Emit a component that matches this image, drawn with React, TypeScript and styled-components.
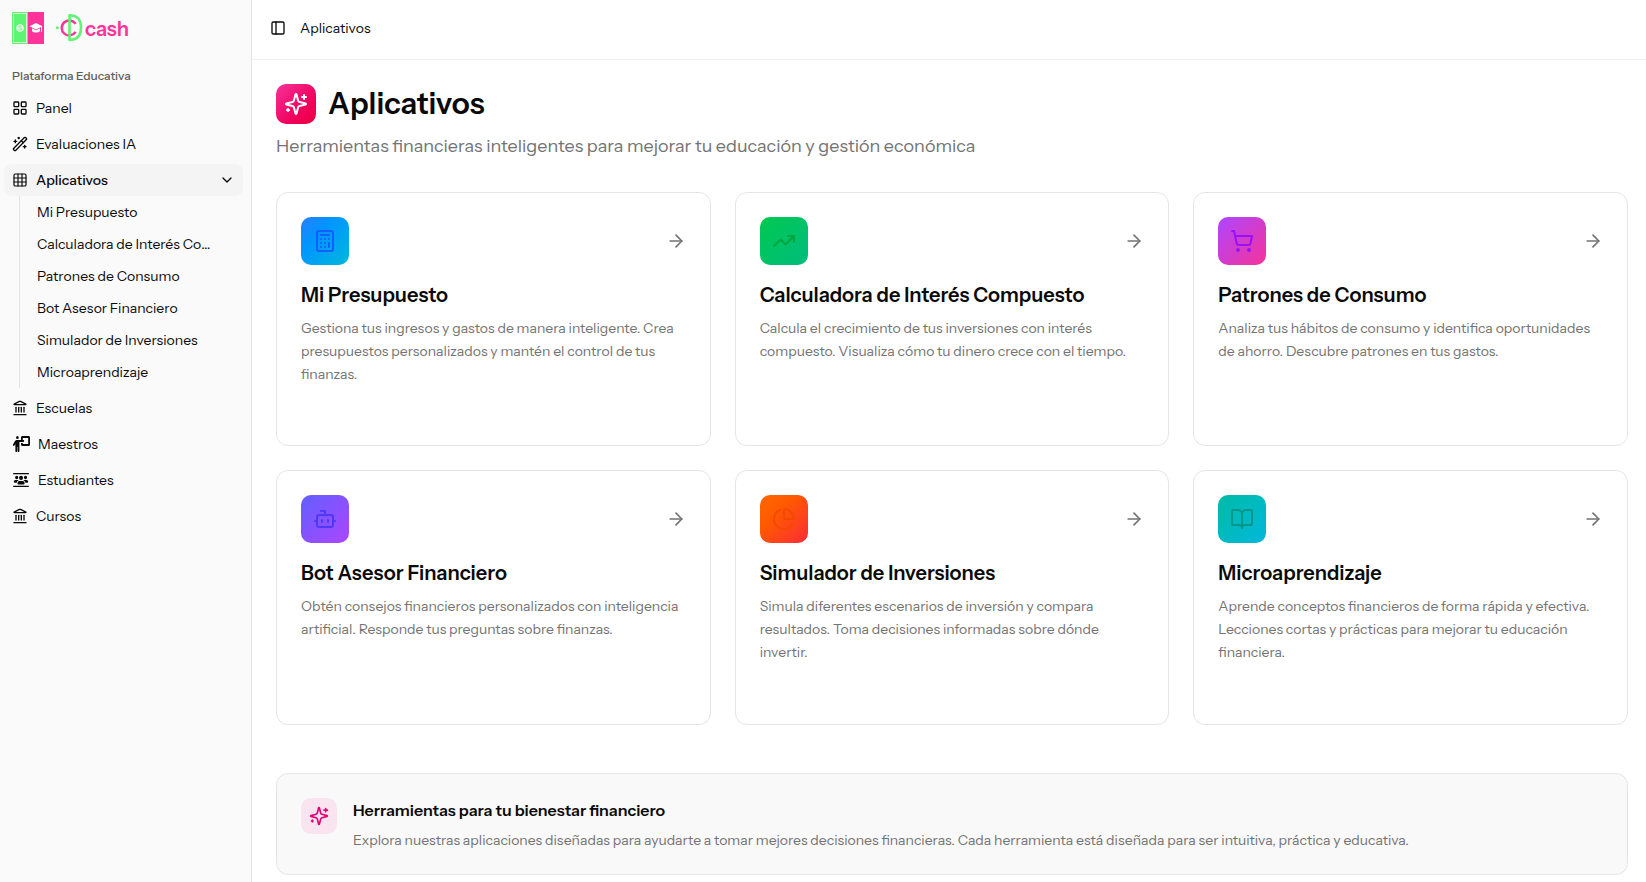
import React from "react";
import styled, { createGlobalStyle } from "styled-components";
import {
  ArrowRight,
  BookOpen,
  Bot,
  Calculator,
  ChartPie,
  ChevronDown,
  Grid3x3,
  Landmark,
  LayoutGrid,
  PanelLeft,
  ShoppingCart,
  TrendingUp,
  WandSparkles,
} from "lucide-react";
import { FaPersonChalkboard, FaUsersBetweenLines } from "react-icons/fa6";

const GlobalStyle = createGlobalStyle`
  *, *::before, *::after { box-sizing: border-box; }
  body {
    margin: 0;
    background: #fff;
    color: #0a0a0a;
    font-family: "Instrument Sans", "Liberation Sans", Arial, sans-serif;
    font-size: 14px;
    line-height: 20px;
  }
  h1, h2, h3, p, ul { margin: 0; padding: 0; }
  ul { list-style: none; }
  a { color: inherit; text-decoration: none; }
  button { font: inherit; color: inherit; border: 0; background: none; padding: 0; cursor: pointer; }
  svg { display: block; flex-shrink: 0; }
`;

const Layout = styled.div`
  display: flex;
  min-height: 100vh;
`;

const Sidebar = styled.aside`
  width: 252px;
  flex-shrink: 0;
  padding: 8px 8px 8px 4px;
  background: #fafafa;
  border-right: 1px solid #e5e5e5;
`;

const Brand = styled.a`
  display: flex;
  align-items: center;
  height: 40px;
  padding: 0 8px;
`;

const GroupLabel = styled.h3`
  height: 32px;
  margin-top: 12px;
  padding: 0 8px;
  color: #5c5c5c;
  font-size: 12px;
  font-weight: 500;
  line-height: 32px;
`;

const Menu = styled.ul`
  display: flex;
  flex-direction: column;
  gap: 4px;
`;

const MenuLink = styled.a`
  display: flex;
  align-items: center;
  gap: 8px;
  height: 32px;
  padding: 0 8px;
`;

const SolidIcon = styled.span<{ $width: number; $height: number }>`
  display: grid;
  place-items: center;
  width: 18px;
  height: 16px;

  svg {
    width: ${(p) => p.$width}px;
    height: ${(p) => p.$height}px;
  }
`;

const MenuToggle = styled.button`
  display: flex;
  align-items: center;
  gap: 8px;
  width: 100%;
  height: 32px;
  padding: 0 8px;
  border-radius: 8px;
  background: #f4f4f5;
  text-align: left;

  span { flex: 1; font-weight: 500; }
`;

const SubMenu = styled.ul`
  display: flex;
  flex-direction: column;
  gap: 4px;
  margin: 0 15px;
  padding: 2px 9px;
  border-left: 1px solid #e5e5e5;
`;

const SubLink = styled.a`
  display: block;
  height: 28px;
  padding: 0 8px;
  line-height: 28px;
  overflow: hidden;
  text-overflow: ellipsis;
  white-space: nowrap;
`;

const Main = styled.main`
  flex: 1;
  min-width: 0;
`;

const TopBar = styled.header`
  display: flex;
  align-items: center;
  gap: 8px;
  height: 60px;
  padding: 0 12px 4px;
  border-bottom: 1px solid #f0f0f0;
`;

const PanelToggle = styled.button`
  display: grid;
  place-items: center;
  width: 28px;
  height: 28px;
`;

const Content = styled.div`
  padding: 24px 18px 8px 24px;
`;

const Heading = styled.div`
  display: flex;
  align-items: center;
  gap: 12px;
`;

const HeadingTile = styled.div`
  display: grid;
  place-items: center;
  width: 40px;
  height: 40px;
  border-radius: 10px;
  background: linear-gradient(to bottom right, #f6339a, #f0005c 65%, #ec003f);
  color: #fff;
`;

const Title = styled.h1`
  font-size: 30px;
  font-weight: 600;
  line-height: 36px;
`;

const Subtitle = styled.p`
  margin-top: 8px;
  color: #737373;
  font-size: 18px;
  line-height: 28px;
`;

const Cards = styled.section`
  display: grid;
  grid-template-columns: repeat(3, 1fr);
  grid-template-rows: minmax(254px, auto) minmax(255px, auto);
  gap: 24px;
  margin-top: 32px;
`;

const Card = styled.a`
  display: block;
  padding: 24px;
  border: 1px solid #e5e5e5;
  border-radius: 12px;
`;

const CardTop = styled.div`
  display: flex;
  align-items: center;
  justify-content: space-between;
  color: #737373;
`;

const CardTile = styled.div<{ $fill: string; $ink: string }>`
  display: grid;
  place-items: center;
  width: 48px;
  height: 48px;
  border-radius: 10px;
  background: linear-gradient(to bottom right, ${(p) => p.$fill});
  color: ${(p) => p.$ink};
`;

const CardTitle = styled.h2`
  margin-top: 16px;
  font-size: 20px;
  font-weight: 600;
  line-height: 28px;
`;

const CardText = styled.p`
  margin-top: 8px;
  color: #737373;
  line-height: 23px;
`;

const Notice = styled.section`
  display: flex;
  align-items: flex-start;
  gap: 16px;
  margin-top: 48px;
  padding: 24px;
  border: 1px solid #e5e5e5;
  border-radius: 12px;
  background: #f9f9f9;
`;

const NoticeTile = styled.div`
  display: grid;
  place-items: center;
  width: 36px;
  height: 36px;
  border-radius: 10px;
  background: #f9e4ef;
  color: #e60076;
`;

const NoticeTitle = styled.h3`
  font-size: 16px;
  font-weight: 600;
  line-height: 24px;
`;

const NoticeText = styled.p`
  margin-top: 8px;
  color: #737373;
  line-height: 20px;
`;

function Sparkles({ size }: { size: number }) {
  return (
    <svg
      width={size}
      height={size}
      viewBox="0 0 24 24"
      fill="none"
      stroke="currentColor"
      strokeWidth="2"
      strokeLinecap="round"
      strokeLinejoin="round"
      aria-hidden="true"
    >
      <path d="M9.937 15.5A2 2 0 0 0 8.5 14.063l-6.135-1.582a.5.5 0 0 1 0-.962L8.5 9.936A2 2 0 0 0 9.937 8.5l1.582-6.135a.5.5 0 0 1 .963 0L14.063 8.5A2 2 0 0 0 15.5 9.937l6.135 1.581a.5.5 0 0 1 0 .964L15.5 14.063a2 2 0 0 0-1.437 1.437l-1.582 6.135a.5.5 0 0 1-.963 0z" />
      <path d="M20 3v4M22 5h-4M4 17v2M5 18H3" />
    </svg>
  );
}

function Logo() {
  return (
    <svg width="120" height="40" viewBox="0 0 120 40" role="img" aria-label="cash">
      <rect x="0" y="4" width="16" height="32" fill="#5ef573" />
      <rect x="1.5" y="5.5" width="13" height="29" fill="none" stroke="#d9fcdf" strokeWidth="1" />
      <circle cx="8" cy="20" r="3.8" fill="#e9fdec" />
      <path d="M9.6 18.4c-1.2-1-3-.5-2.8.6.2 1.2 2.8.8 2.8 2.1 0 1.2-2 1.3-3.2.4" fill="none" stroke="#5ef573" strokeWidth="0.9" />
      <rect x="16" y="4" width="16" height="32" fill="#ff3399" />
      <path d="M24 15l6.5 3.2L24 21.4l-6.5-3.2z" fill="#fff" />
      <path d="M20 20.300l4 2 4-2v2.600c-1.600 2-6.400 2-8 0z" fill="#fff" />
      <path d="M29.500 18.500v5.500" stroke="#fff" strokeWidth="1" />
      <circle cx="45.300" cy="19.700" r="1.500" fill="#5ef573" />
      <path d="M63.600 15.900a7.500 7.500 0 1 0 0 8" fill="none" stroke="#ff3399" strokeWidth="2.500" />
      <path d="M57.500 7.200v24.800c8.500 0 11.500-5.500 11.500-12.400s-3-12.400-11.500-12.400z" fill="none" stroke="#5ef573" strokeWidth="2.600" strokeLinejoin="round" />
      <text x="73" y="28" fill="#ff3399" fontSize="20" fontWeight="600">
        cash
      </text>
    </svg>
  );
}

const apps = [
  {
    title: "Mi Presupuesto",
    text: "Gestiona tus ingresos y gastos de manera inteligente. Crea presupuestos personalizados y mantén el control de tus finanzas.",
    icon: Calculator,
    fill: "#2b7fff, #0095ff 35%, #00b8db",
    ink: "#155dfc",
  },
  {
    title: "Calculadora de Interés Compuesto",
    text: "Calcula el crecimiento de tus inversiones con interés compuesto. Visualiza cómo tu dinero crece con el tiempo.",
    icon: TrendingUp,
    fill: "#00c950, #00bc7d",
    ink: "#00a63e",
  },
  {
    title: "Patrones de Consumo",
    text: "Analiza tus hábitos de consumo y identifica oportunidades de ahorro. Descubre patrones en tus gastos.",
    icon: ShoppingCart,
    fill: "#ad46ff, #f6339a",
    ink: "#9810fa",
  },
  {
    title: "Bot Asesor Financiero",
    text: "Obtén consejos financieros personalizados con inteligencia artificial. Responde tus preguntas sobre finanzas.",
    icon: Bot,
    fill: "#615fff, #ad46ff",
    ink: "#4f39f6",
  },
  {
    title: "Simulador de Inversiones",
    text: "Simula diferentes escenarios de inversión y compara resultados. Toma decisiones informadas sobre dónde invertir.",
    icon: ChartPie,
    fill: "#ff6900, #ff5a00 35%, #fb2c36",
    ink: "#f54900",
  },
  {
    title: "Microaprendizaje",
    text: "Aprende conceptos financieros de forma rápida y efectiva. Lecciones cortas y prácticas para mejorar tu educación financiera.",
    icon: BookOpen,
    fill: "#00bba7, #00b8db",
    ink: "#009689",
  },
];

export default function App() {
  return (
    <>
      <GlobalStyle />
      <Layout>
        <Sidebar>
          <Brand href="#">
            <Logo />
          </Brand>
          <GroupLabel>Plataforma Educativa</GroupLabel>
          <nav>
            <Menu>
              <li><MenuLink href="#"><LayoutGrid size={16} />Panel</MenuLink></li>
              <li><MenuLink href="#"><WandSparkles size={16} />Evaluaciones IA</MenuLink></li>
              <li>
                <MenuToggle type="button" aria-expanded="true">
                  <Grid3x3 size={16} strokeWidth={1.75} />
                  <span>Aplicativos</span>
                  <ChevronDown size={16} />
                </MenuToggle>
                <SubMenu>
                  {apps.map((app) => (
                    <li key={app.title}><SubLink href="#" title={app.title}>{app.title}</SubLink></li>
                  ))}
                </SubMenu>
              </li>
              <li><MenuLink href="#"><Landmark size={16} />Escuelas</MenuLink></li>
              <li>
                <MenuLink href="#">
                  <SolidIcon $width={18} $height={16}><FaPersonChalkboard preserveAspectRatio="none" /></SolidIcon>
                  Maestros
                </MenuLink>
              </li>
              <li>
                <MenuLink href="#">
                  <SolidIcon $width={16} $height={14}><FaUsersBetweenLines preserveAspectRatio="none" /></SolidIcon>
                  Estudiantes
                </MenuLink>
              </li>
              <li><MenuLink href="#"><Landmark size={16} />Cursos</MenuLink></li>
            </Menu>
          </nav>
        </Sidebar>
        <Main>
          <TopBar>
            <PanelToggle type="button" aria-label="Alternar barra lateral"><PanelLeft size={16} /></PanelToggle>
            <span>Aplicativos</span>
          </TopBar>
          <Content>
            <Heading>
              <HeadingTile><Sparkles size={24} /></HeadingTile>
              <Title>Aplicativos</Title>
            </Heading>
            <Subtitle>Herramientas financieras inteligentes para mejorar tu educación y gestión económica</Subtitle>
            <Cards>
              {apps.map(({ title, text, icon: Icon, fill, ink }) => (
                <Card href="#" key={title}>
                  <CardTop>
                    <CardTile $fill={fill} $ink={ink}><Icon size={24} /></CardTile>
                    <ArrowRight size={20} />
                  </CardTop>
                  <CardTitle>{title}</CardTitle>
                  <CardText>{text}</CardText>
                </Card>
              ))}
            </Cards>
            <Notice>
              <NoticeTile><Sparkles size={20} /></NoticeTile>
              <div>
                <NoticeTitle>Herramientas para tu bienestar financiero</NoticeTitle>
                <NoticeText>
                  Explora nuestras aplicaciones diseñadas para ayudarte a tomar mejores decisiones financieras. Cada herramienta está diseñada para ser intuitiva, práctica y educativa.
                </NoticeText>
              </div>
            </Notice>
          </Content>
        </Main>
      </Layout>
    </>
  );
}
